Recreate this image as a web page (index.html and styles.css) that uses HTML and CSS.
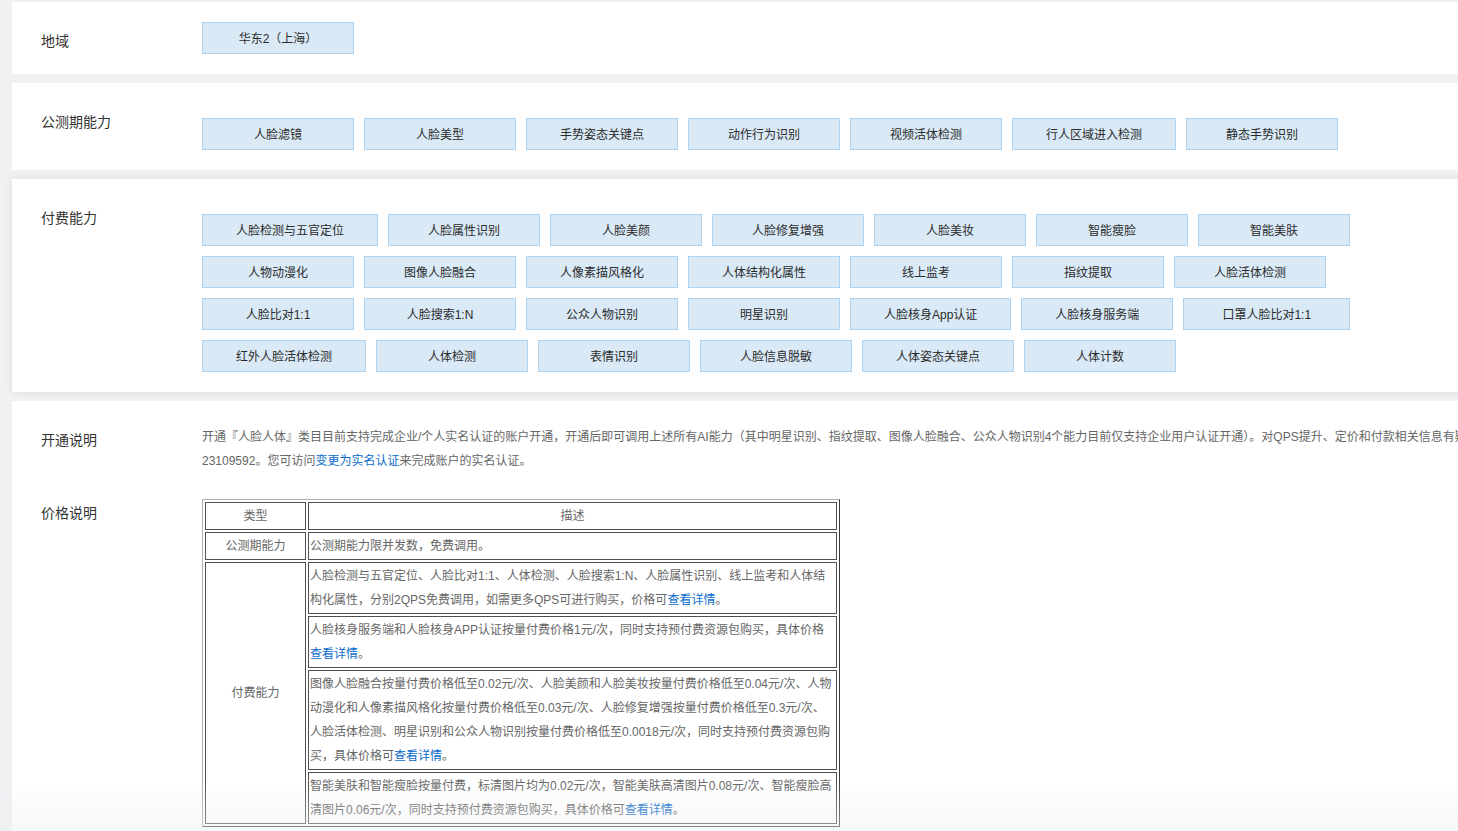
FILE: index.html
```html
<!DOCTYPE html>
<html lang="zh-CN">
<head>
    <meta charset="UTF-8">
    <meta name="viewport" content="width=device-width, initial-scale=1.0">
    <title>人脸人体</title>
    <link rel="stylesheet" href="styles.css">
</head>
<body>
    <div class="page">
        <!-- 地域 -->
        <div class="card">
            <div class="row">
                <div class="row-label">地域</div>
                <div class="tags tags-flat">
                    <span class="tag">华东2（上海）</span>
                </div>
            </div>
        </div>

        <!-- 公测期能力 -->
        <div class="card">
            <div class="row">
                <div class="row-label">公测期能力</div>
                <div class="tags">
                    <span class="tag">人脸滤镜</span>
                    <span class="tag">人脸美型</span>
                    <span class="tag">手势姿态关键点</span>
                    <span class="tag">动作行为识别</span>
                    <span class="tag">视频活体检测</span>
                    <span class="tag">行人区域进入检测</span>
                    <span class="tag">静态手势识别</span>
                </div>
            </div>
        </div>

        <!-- 付费能力 -->
        <div class="card card-raised">
            <div class="row">
                <div class="row-label">付费能力</div>
                <div class="tags">
                    <span class="tag">人脸检测与五官定位</span>
                    <span class="tag">人脸属性识别</span>
                    <span class="tag">人脸美颜</span>
                    <span class="tag">人脸修复增强</span>
                    <span class="tag">人脸美妆</span>
                    <span class="tag">智能瘦脸</span>
                    <span class="tag">智能美肤</span>
                    <span class="tag">人物动漫化</span>
                    <span class="tag">图像人脸融合</span>
                    <span class="tag">人像素描风格化</span>
                    <span class="tag">人体结构化属性</span>
                    <span class="tag">线上监考</span>
                    <span class="tag">指纹提取</span>
                    <span class="tag">人脸活体检测</span>
                    <span class="tag">人脸比对1:1</span>
                    <span class="tag">人脸搜索1:N</span>
                    <span class="tag">公众人物识别</span>
                    <span class="tag">明星识别</span>
                    <span class="tag">人脸核身App认证</span>
                    <span class="tag">人脸核身服务端</span>
                    <span class="tag tag-wide">口罩人脸比对1:1</span>
                    <span class="tag">红外人脸活体检测</span>
                    <span class="tag">人体检测</span>
                    <span class="tag">表情识别</span>
                    <span class="tag">人脸信息脱敏</span>
                    <span class="tag">人体姿态关键点</span>
                    <span class="tag">人体计数</span>
                </div>
            </div>
        </div>

        <!-- 说明 -->
        <div class="card">
            <div class="row">
                <div class="row-label">开通说明</div>
                <p class="note">开通『人脸人体』类目目前支持完成企业/个人实名认证的账户开通，开通后即可调用上述所有AI能力（其中明星识别、指纹提取、图像人脸融合、公众人物识别4个能力目前仅支持企业用户认证开通）。对QPS提升、定价和付款相关信息有疑问，可加入钉钉群<br>23109592。您可访问<a class="link" href="#">变更为实名认证</a>来完成账户的实名认证。</p>
            </div>

            <div class="row price-row">
                <div class="row-label">价格说明</div>
                <table class="price-table">
                    <tr>
                        <td class="type-cell">类型</td>
                        <td class="head-cell">描述</td>
                    </tr>
                    <tr>
                        <td class="type-cell">公测期能力</td>
                        <td>公测期能力限并发数，免费调用。</td>
                    </tr>
                    <tr>
                        <td class="type-cell" rowspan="4">付费能力</td>
                        <td>人脸检测与五官定位、人脸比对1:1、人体检测、人脸搜索1:N、人脸属性识别、线上监考和人体结构化属性，分别2QPS免费调用，如需更多QPS可进行购买，价格可<a class="link" href="#">查看详情</a>。</td>
                    </tr>
                    <tr>
                        <td>人脸核身服务端和人脸核身APP认证按量付费价格1元/次，同时支持预付费资源包购买，具体价格<a class="link" href="#">查看详情</a>。</td>
                    </tr>
                    <tr>
                        <td>图像人脸融合按量付费价格低至0.02元/次、人脸美颜和人脸美妆按量付费价格低至0.04元/次、人物动漫化和人像素描风格化按量付费价格低至0.03元/次、人脸修复增强按量付费价格低至0.3元/次、人脸活体检测、明星识别和公众人物识别按量付费价格低至0.0018元/次，同时支持预付费资源包购买，具体价格可<a class="link" href="#">查看详情</a>。</td>
                    </tr>
                    <tr>
                        <td>智能美肤和智能瘦脸按量付费，标清图片均为0.02元/次，智能美肤高清图片0.08元/次、智能瘦脸高清图片0.06元/次，同时支持预付费资源包购买，具体价格可<a class="link" href="#">查看详情</a>。</td>
                    </tr>
                </table>
            </div>
        </div>
    </div>

    <div class="fade"></div>
</body>
</html>
```

FILE: styles.css
```css
/* Reset */
* {
    margin: 0;
    padding: 0;
    box-sizing: border-box;
}

html, body {
    height: 100%;
    overflow: hidden;
}

body {
    background: #f0f1f3;
    color: #333;
    font-family: "Liberation Sans", "Noto Sans CJK SC", sans-serif;
    padding: 2px 0 0 12px;
}

.page {
    width: 1800px;
    display: flex;
    flex-direction: column;
    gap: 9px;
}

.card {
    background: #fff;
    padding: 20px 0 20px 29px;
}

.card-raised {
    box-shadow: 0 0 8px rgba(0, 0, 0, 0.09);
}

.row {
    display: flex;
    align-items: flex-start;
}

.row-label {
    width: 161px;
    flex-shrink: 0;
    font-size: 14px;
    line-height: 20px;
    margin-top: 9px;
    color: #333;
}

/* capability tags */
.tags {
    width: 1200px;
    display: flex;
    flex-wrap: wrap;
    gap: 10px;
    margin-top: 15px;
}

.tags-flat {
    margin-top: 0;
}

.tag {
    height: 32px;
    min-width: 152px;
    padding: 2px 33px 0;
    border: 1px solid #acd2ef;
    background: #d9e9f6;
    color: #2b2b2b;
    font-size: 12px;
    line-height: 28px;
    text-align: center;
    white-space: nowrap;
}

.tag-wide {
    padding: 2px 38px 0;
}

/* notes */
.note {
    margin-top: 4px;
    font-size: 12px;
    line-height: 24px;
    color: #666;
    white-space: nowrap;
}

.link {
    color: #0a6bcb;
    text-decoration: none;
}

.price-row {
    margin-top: 21px;
}

.price-table {
    margin-top: 5px;
    width: 638px;
    table-layout: fixed;
    border-collapse: separate;
    border-spacing: 2px;
    border: 1px solid;
    border-color: #b0b0b0 #3c3c3c #3c3c3c #b0b0b0;
    font-size: 12px;
    line-height: 24px;
    color: #666;
}

.price-table td {
    border: 1px solid #505050;
    padding: 1px;
    vertical-align: middle;
}

.price-table .type-cell {
    width: 101px;
    text-align: center;
}

.price-table .head-cell {
    text-align: center;
}

/* bottom fade over the page */
.fade {
    position: fixed;
    left: 0;
    right: 0;
    bottom: 0;
    height: 50px;
    background: linear-gradient(rgba(236, 237, 239, 0), rgba(236, 237, 239, 0.45));
    pointer-events: none;
}
```
